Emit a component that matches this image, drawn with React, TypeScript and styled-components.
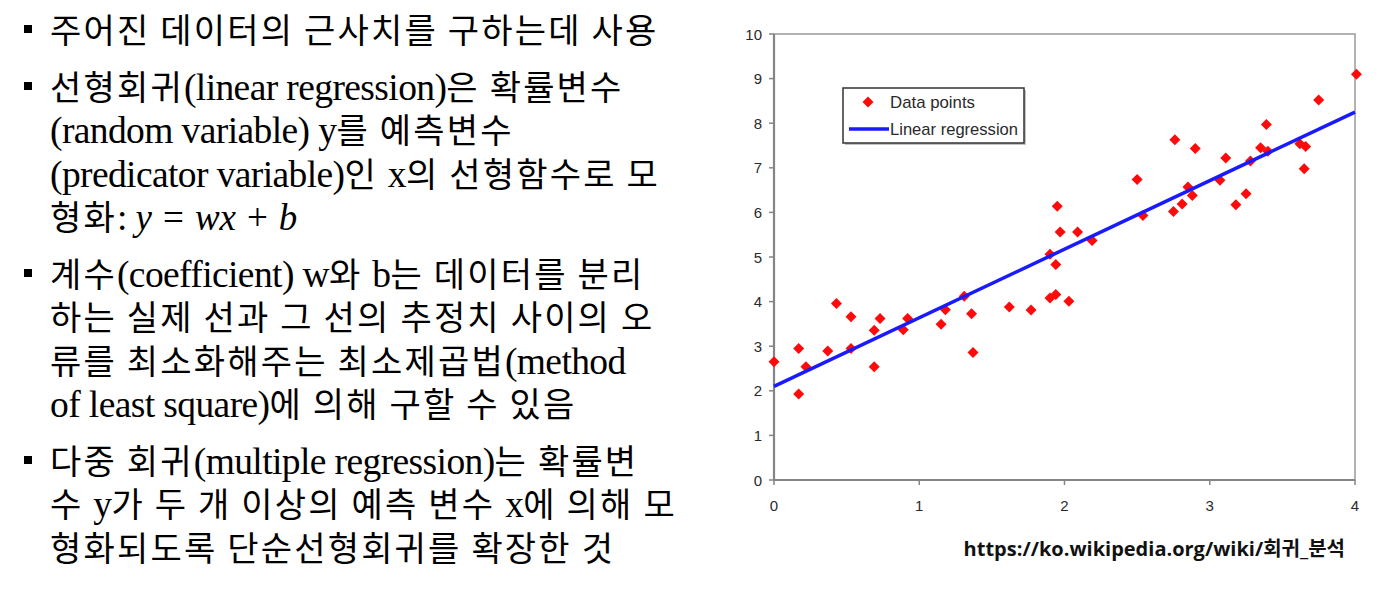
import React from 'react'
import styled, { createGlobalStyle } from 'styled-components'

const GlobalStyle = createGlobalStyle`
  html, body {
    margin: 0;
    padding: 0;
    background: #ffffff;
  }
  body {
    font-family: "Noto Sans CJK KR", "Noto Sans", sans-serif;
    color: #000;
  }
`

const Page = styled.div`
  display: grid;
  grid-template-columns: 735px 640px;
  width: 1386px;
  height: 597px;
  overflow: hidden;
`

const TextColumn = styled.div`
  display: flex;
  flex-direction: column;
  gap: 13px;
  padding: 7px 0 0 24px;
`

const Item = styled.div`
  display: flex;
  align-items: flex-start;
  gap: 18px;
`

const Bullet = styled.span`
  flex: none;
  width: 8px;
  height: 8px;
  margin-top: 18px;
  background: #000;
`

const Para = styled.div`
  font-size: 34px;
  line-height: 43.5px;
  white-space: nowrap;
  letter-spacing: 2.2px;
`

const Latin = styled.span`
  font-family: "Liberation Serif", "Noto Sans CJK KR", serif;
  font-size: 37.5px;
  line-height: 1;
  letter-spacing: -0.6px;
`

const MathText = styled.span`
  font-family: "Liberation Serif", serif;
  font-size: 37px;
  line-height: 1;
  letter-spacing: 0;

  i {
    font-style: italic;
  }
  .op {
    padding: 0 11px;
  }
`

const FigureColumn = styled.div`
  display: flex;
  flex-direction: column;
  padding-top: 20px;
`

const ChartSvg = styled.svg`
  display: block;
  width: 640px;
  height: 500px;
  font-family: "Liberation Sans", Arial, sans-serif;
`

const Caption = styled.div`
  margin-top: 16px;
  padding-right: 30px;
  text-align: right;
  font-family: "Open Sans", "Noto Sans CJK KR", sans-serif;
  font-weight: 700;
  font-size: 20px;
  line-height: 26px;
  color: #111;
`

const X0 = 39
const XU = 145.25
const Y0 = 460
const YU = 44.6

const px = (x: number) => X0 + x * XU
const py = (y: number) => Y0 - y * YU

const points: [number, number][] = [
  [0.0, 2.65], [0.17, 2.95], [0.17, 1.93], [0.22, 2.54], [0.37, 2.89],
  [0.43, 3.96], [0.53, 3.66], [0.53, 2.95], [0.69, 3.36], [0.73, 3.62],
  [0.69, 2.54], [0.89, 3.37], [0.92, 3.62], [1.15, 3.49], [1.18, 3.82],
  [1.31, 4.12], [1.36, 3.73], [1.37, 2.86], [1.62, 3.88], [1.77, 3.81],
  [1.90, 4.08], [1.94, 4.16], [2.03, 4.01], [1.90, 5.06], [1.94, 4.83],
  [1.95, 6.14], [1.97, 5.56], [2.09, 5.56], [2.19, 5.37], [2.50, 6.74],
  [2.54, 5.93], [2.75, 6.02], [2.76, 7.63], [2.81, 6.19], [2.85, 6.57],
  [2.88, 6.38], [2.90, 7.43], [3.07, 6.72], [3.11, 7.22], [3.18, 6.17],
  [3.25, 6.42], [3.28, 7.15], [3.35, 7.45], [3.39, 7.97], [3.40, 7.37],
  [3.62, 7.54], [3.66, 7.48], [3.65, 6.98], [3.75, 8.52], [4.01, 9.10],
]

const diamond = (cx: number, cy: number, r = 5.5) =>
  `M${cx},${cy - r}L${cx + r},${cy}L${cx},${cy + r}L${cx - r},${cy}Z`

const RegressionChart: React.FC = () => {
  const yTicks = Array.from({ length: 11 }, (_, i) => i)
  const xTicks = [0, 1, 2, 3, 4]
  return (
    <ChartSvg viewBox="0 0 640 500">
      {/* plot frame */}
      <rect x={X0} y={py(10)} width={px(4) - X0} height={Y0 - py(10)} fill="#fff" stroke="#9a9a9a" strokeWidth={1.5} />
      <line x1={X0} y1={py(10)} x2={X0} y2={Y0} stroke="#858585" strokeWidth={2.2} />
      <line x1={X0} y1={Y0} x2={px(4)} y2={Y0} stroke="#858585" strokeWidth={2.2} />

      {yTicks.map(t => (
        <g key={`y${t}`}>
          <line x1={X0 - 5} y1={py(t)} x2={X0} y2={py(t)} stroke="#858585" strokeWidth={1.5} />
          <text x={27} y={py(t) + 5.5} textAnchor="end" fontSize={15} fill="#2a2a2a">{t}</text>
        </g>
      ))}
      {xTicks.map(t => (
        <g key={`x${t}`}>
          <line x1={px(t)} y1={Y0} x2={px(t)} y2={Y0 + 5} stroke="#858585" strokeWidth={1.5} />
          <text x={px(t)} y={491} textAnchor="middle" fontSize={15} fill="#2a2a2a">{t}</text>
        </g>
      ))}

      {points.map(([x, y], i) => (
        <path key={i} d={diamond(px(x), py(y))} fill="#ff0a0a" />
      ))}

      <line x1={px(0)} y1={py(2.1)} x2={px(4)} y2={py(8.25)} stroke="#1a1aff" strokeWidth={3.5} />

      {/* legend */}
      <rect x={110} y={70} width={181} height={55} fill="#888" opacity={0.5} />
      <rect x={108} y={68} width={181} height={55} fill="#fff" stroke="#333" strokeWidth={1.5} />
      <path d={diamond(133, 82)} fill="#ff0a0a" />
      <text x={155} y={88} fontSize={17} fill="#2a2a2a" textLength={85} lengthAdjust="spacingAndGlyphs">Data points</text>
      <line x1={114} y1={109} x2={154} y2={109} stroke="#1a1aff" strokeWidth={3.5} />
      <text x={155} y={115} fontSize={17} fill="#2a2a2a" textLength={128} lengthAdjust="spacingAndGlyphs">Linear regression</text>
    </ChartSvg>
  )
}

export default function App() {
  return (
    <>
      <GlobalStyle />
      <Page>
        <TextColumn>
          <Item>
            <Bullet />
            <Para>주어진 데이터의 근사치를 구하는데 사용</Para>
          </Item>
          <Item>
            <Bullet />
            <Para>
              선형회귀<Latin>(linear regression)</Latin>은 확률변수
              <br />
              <Latin>(random variable) y</Latin>를 예측변수
              <br />
              <Latin>(predicator variable)</Latin>인 <Latin>x</Latin>의 선형함수로 모
              <br />
              형화<Latin>: </Latin>
              <MathText>
                <i>y</i><span className="op">=</span><i>wx</i><span className="op">+</span><i>b</i>
              </MathText>
            </Para>
          </Item>
          <Item>
            <Bullet />
            <Para>
              계수<Latin>(coefficient) w</Latin>와 <Latin>b</Latin>는 데이터를 분리
              <br />
              하는 실제 선과 그 선의 추정치 사이의 오
              <br />
              류를 최소화해주는 최소제곱법<Latin>(method</Latin>
              <br />
              <Latin>of least square)</Latin>에 의해 구할 수 있음
            </Para>
          </Item>
          <Item>
            <Bullet />
            <Para>
              다중 회귀<Latin>(multiple regression)</Latin>는 확률변
              <br />
              수 <Latin>y</Latin>가 두 개 이상의 예측 변수 <Latin>x</Latin>에 의해 모
              <br />
              형화되도록 단순선형회귀를 확장한 것
            </Para>
          </Item>
        </TextColumn>
        <FigureColumn>
          <RegressionChart />
          <Caption>https://ko.wikipedia.org/wiki/회귀_분석</Caption>
        </FigureColumn>
      </Page>
    </>
  )
}
